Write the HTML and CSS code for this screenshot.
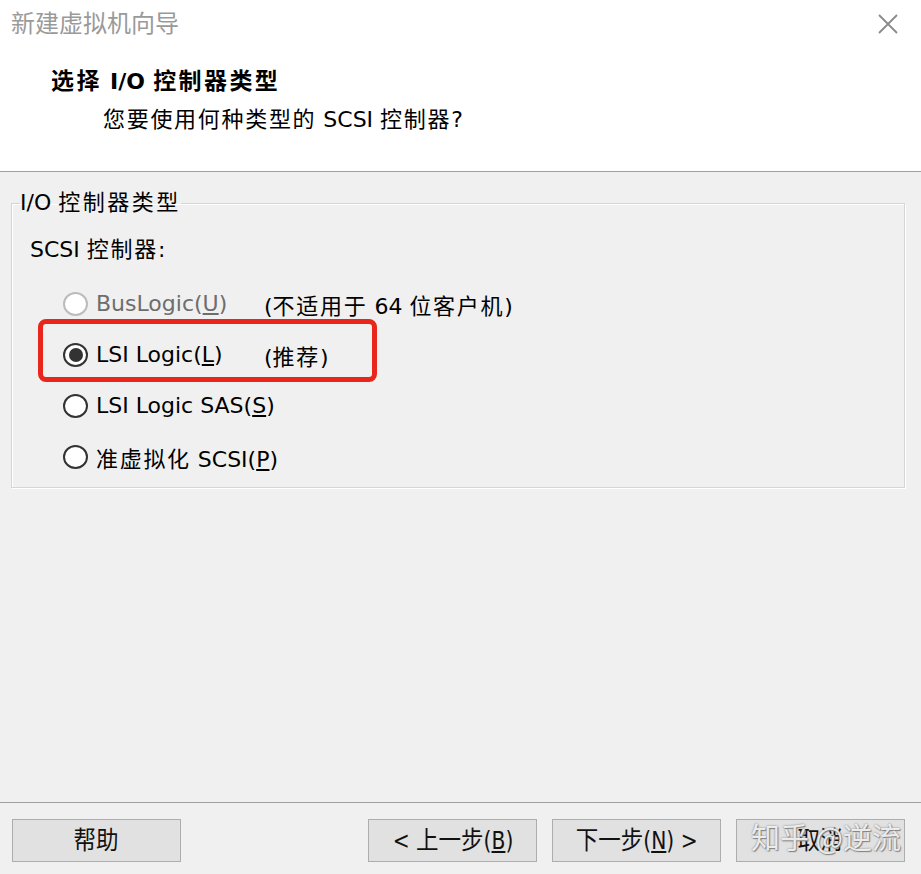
FILE: index.html
```html
<!DOCTYPE html>
<html lang="zh-CN">
<head>
<meta charset="utf-8">
<title>新建虚拟机向导</title>
<link rel="stylesheet" href="styles.css">
</head>
<body>
<div class="window">
  <header class="header">
    <div class="titlebar">
      <span class="title">新建虚拟机向导</span>
      <svg class="close" width="22" height="22" viewBox="0 0 22 22"><path d="M2 2 L20 20 M20 2 L2 20" stroke="#8a8a8a" stroke-width="1.8" fill="none"/></svg>
    </div>
    <h1 class="heading"><span class="cj">选择</span> <span class="latin">I/O</span> <span class="cj">控制器类型</span></h1>
    <p class="subtitle"><span class="cj">您要使用何种类型的</span> SCSI <span class="cj">控制器</span>?</p>
  </header>

  <main class="content">
    <fieldset class="group">
      <legend class="legend">I/O <span class="cj">控制器类型</span></legend>
      <div class="label">SCSI <span class="cj">控制器</span>:</div>
      <div class="options">
        <label class="opt disabled"><span class="radio"></span><span class="name">BusLogic(<u>U</u>)</span></label>
        <span class="note">(<span class="cj">不适用于</span> 64 <span class="cj">位客户机</span>)</span>
        <label class="opt"><span class="radio checked"></span><span class="name">LSI Logic(<u>L</u>)</span></label>
        <span class="note">(<span class="cj">推荐</span>)</span>
        <label class="opt"><span class="radio"></span><span class="name">LSI Logic SAS(<u>S</u>)</span></label>
        <span class="note"></span>
        <label class="opt"><span class="radio"></span><span class="name"><span class="cj">准虚拟化</span> SCSI(<u>P</u>)</span></label>
        <span class="note"></span>
      </div>
    </fieldset>
    <div class="highlight"></div>
  </main>

  <footer class="footer">
    <button class="btn"><span class="btn-text">帮助</span></button>
    <div class="spacer"></div>
    <button class="btn"><span class="btn-text">&lt; 上一步(<u>B</u>)</span></button>
    <button class="btn"><span class="btn-text">下一步(<u>N</u>) &gt;</span></button>
    <button class="btn"><span class="btn-text">取消</span></button>
    <div class="watermark">知乎 @逆流</div>
  </footer>
</div>
</body>
</html>
```
FILE: styles.css
```css
* { box-sizing: border-box; }
html, body { margin: 0; padding: 0; }
body {
  width: 921px;
  height: 874px;
  overflow: hidden;
  background: #f0f0f0;
  font-family: "DejaVu Sans", "Noto Sans CJK SC", sans-serif;
  font-size: 22px;
  color: #000;
}
.cj { letter-spacing: 1.7px; }
.window {
  position: relative;
  height: 874px;
  display: flex;
  flex-direction: column;
}
.header {
  background: #fff;
  height: 172px;
  border-bottom: 1px solid #a0a0a0;
  flex: none;
}
.titlebar {
  display: flex;
  justify-content: space-between;
  align-items: flex-start;
  padding: 5px 22px 0 11px;
  height: 62px;
}
.title {
  font-family: "Noto Sans CJK SC", sans-serif;
  font-size: 24px;
  line-height: 34px;
  color: #9a9a9a;
}
.close { margin-top: 8px; }
.heading {
  margin: 0;
  padding-left: 51px;
  font-family: "Noto Sans CJK SC", sans-serif;
  font-size: 23px;
  font-weight: 700;
  line-height: 34px;
  white-space: nowrap;
}
.heading .cj { letter-spacing: 2.4px; }
.heading .latin {
  font-family: "DejaVu Sans", sans-serif;
  font-weight: 700;
  font-size: 22px;
  margin: 0 3px;
}
.subtitle {
  margin: 4px 0 0;
  padding-left: 103px;
  line-height: 34px;
  white-space: nowrap;
}
.content {
  position: relative;
  flex: 1;
  padding: 19px 16px 0 11px;
}
.group {
  margin: 0;
  padding: 0 0 0 8px;
  border: 1px solid #d5d5d5;
  box-shadow: inset 1px 1px 0 #fff, 1px 1px 0 #fff;
  height: 297px;
}
.legend {
  padding: 0;
  margin: 0;
  line-height: 24px;
  white-space: nowrap;
}
.legend .cj { letter-spacing: 2.5px; }
.label {
  margin: 20px 0 0 10px;
  line-height: 30px;
}
.options {
  margin-top: 13px;
  display: grid;
  grid-template-columns: 244px auto;
  grid-auto-rows: 51px;
  align-items: center;
}
.opt {
  display: flex;
  align-items: center;
  gap: 8px;
  padding-left: 43px;
  white-space: nowrap;
}
.note { white-space: nowrap; }
.radio {
  width: 25px;
  height: 24px;
  border-radius: 50%;
  border: 2px solid #333;
  background: #fff;
  position: relative;
  flex: none;
}
.radio.checked::after {
  content: "";
  position: absolute;
  left: 3.5px; top: 3px;
  width: 14px; height: 14px;
  border-radius: 50%;
  background: #333;
}
.disabled .radio { border-color: #bcbcbc; }
.disabled .name { color: #6d6d6d; }
.highlight {
  position: absolute;
  left: 38px;
  top: 147px;
  width: 339px;
  height: 63px;
  border: 5px solid #e8261c;
  border-radius: 8px;
}
.footer {
  position: relative;
  flex: none;
  height: 72px;
  border-top: 1px solid #a0a0a0;
  display: flex;
  align-items: flex-start;
  gap: 15px;
  padding: 16px 16px 0 12px;
}
.spacer { flex: 1; }
.btn {
  width: 169px;
  height: 43px;
  background: #e1e1e1;
  border: 1px solid #adadad;
  font-family: "DejaVu Sans Condensed", "Noto Sans CJK SC", sans-serif;
  font-size: 25px;
  color: #111;
  padding: 0;
  display: flex;
  align-items: center;
  justify-content: center;
}
.btn-text {
  display: inline-block;
  transform: scaleX(0.9);
  white-space: nowrap;
  line-height: 30px;
}
.watermark {
  position: absolute;
  left: 751px;
  top: 15px;
  font-family: "Noto Sans CJK SC", sans-serif;
  font-size: 29px;
  line-height: 36px;
  color: rgba(255,255,255,0.85);
  text-shadow: 0 0 2px #777, 1px 1px 1px #888;
  pointer-events: none;
}
```
